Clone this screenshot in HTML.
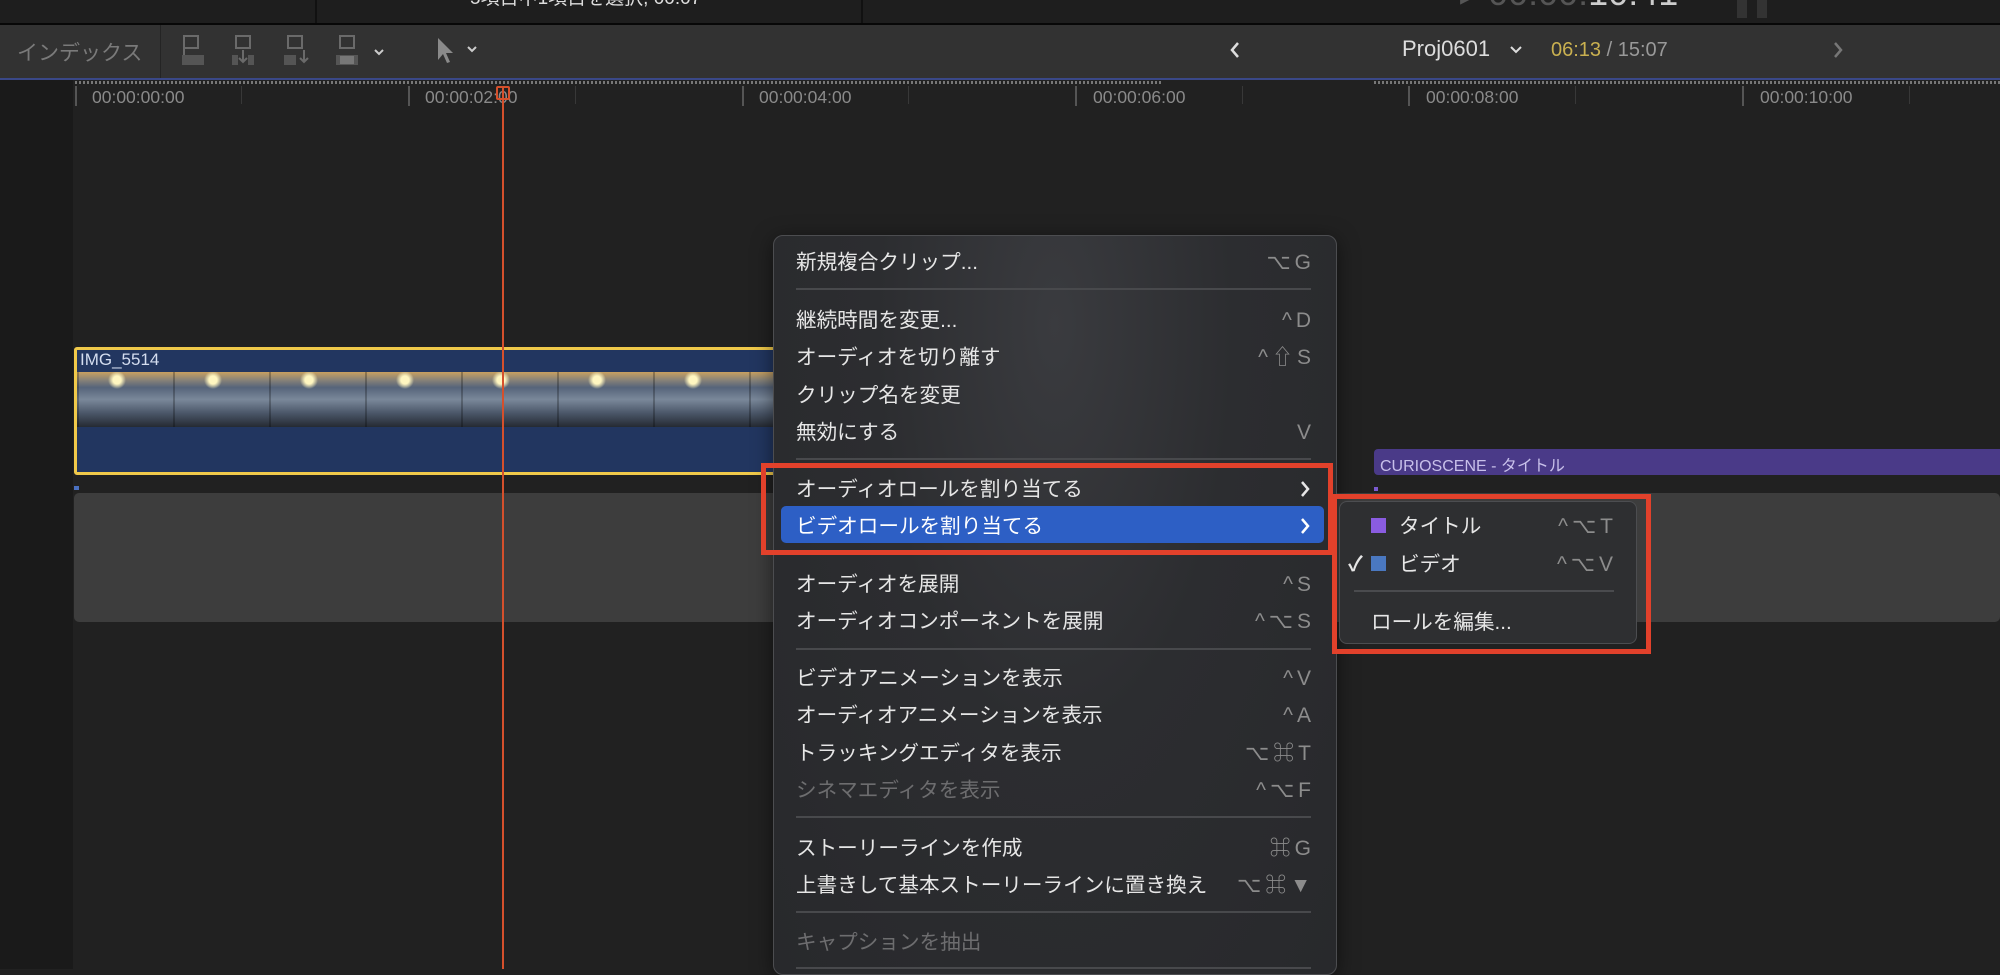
<!DOCTYPE html>
<html><head><meta charset="utf-8"><style>
*{margin:0;padding:0;box-sizing:border-box}
body{width:2000px;height:969px;overflow:hidden;background:#212121;font-family:"Liberation Sans","Noto Sans CJK JP",sans-serif;position:relative}
.a{position:absolute}
.mi{position:absolute;left:796px;font-size:20.6px;color:#e6e6e6;line-height:24px;white-space:nowrap;margin-top:3px}
.sc{position:absolute;font-size:21px;color:#8c8c8c;line-height:24px;white-space:nowrap;text-align:right;letter-spacing:4px;margin-right:-4px;margin-top:3px}
.sep{position:absolute;left:796px;width:515px;height:2px;background:#48494c}
.dis{color:#6d6d6f}
.tc{position:absolute;top:87px;font-size:17.5px;color:#8a8a8a}
.tk{position:absolute;top:86px;width:2px;height:20px;background:#555}
.tk2{position:absolute;top:86px;width:1px;height:18px;background:#383838}
.chev{position:absolute;left:1298px}
</style></head><body>
<div class="a" style="left:0;top:0;width:2000px;height:23px;background:#1e1e1e"></div>
<div class="a" style="left:315px;top:0;width:2px;height:23px;background:#111"></div>
<div class="a" style="left:861px;top:0;width:2px;height:23px;background:#111"></div>
<div class="a" style="left:470px;top:-17px;font-size:19px;color:#ddd;white-space:nowrap">5項目中1項目を選択, 00:07</div>
<div class="a" style="left:1460px;top:-28px;font-size:36px;color:#555;white-space:nowrap">▸ 00:00:<span style="color:#ccc">10:41</span></div>
<div class="a" style="left:1737px;top:0;width:10px;height:18px;background:#333"></div>
<div class="a" style="left:1757px;top:0;width:10px;height:18px;background:#333"></div>
<div class="a" style="left:0;top:23px;width:2000px;height:2px;background:#070707"></div>
<div class="a" style="left:0;top:25px;width:2000px;height:53px;background:#323232"></div>
<div class="a" style="left:17px;top:37px;font-size:21px;color:#7a7a7a">インデックス</div>
<div class="a" style="left:160px;top:25px;width:1px;height:53px;background:#242424"></div>
<svg class="a" style="left:180px;top:33px" width="220" height="36" viewBox="0 0 220 36" fill="none" stroke="#6a6a6a" stroke-width="2">
<rect x="4" y="3" width="14" height="12"/><path d="M4 15v8"/><rect x="2" y="22" width="22" height="10" fill="#555" stroke="none"/>
<rect x="56" y="3" width="14" height="12"/><path d="M63 17v12M59 25l4 4 4-4"/><rect x="52" y="22" width="6" height="10" fill="#555" stroke="none"/><rect x="68" y="22" width="6" height="10" fill="#555" stroke="none"/>
<rect x="108" y="3" width="14" height="12"/><path d="M124 17v12M120 25l4 4 4-4"/><rect x="104" y="22" width="12" height="10" fill="#555" stroke="none"/>
<rect x="160" y="3" width="14" height="12"/><rect x="156" y="22" width="22" height="10" fill="#555" stroke="none"/><rect x="160" y="23" width="14" height="8" fill="#777" stroke="none"/>
<path d="M195 17l4 4 4-4" stroke="#ccc"/>
</svg>
<svg class="a" style="left:435px;top:36px" width="50" height="30" viewBox="0 0 50 30"><path d="M3 2l0 22 5-6 4 9 3-1-4-9 7 0z" fill="#8a8a8a"/><path d="M33 11l4 4 4-4" stroke="#ccc" stroke-width="2" fill="none"/></svg>
<svg class="a" style="left:1228px;top:40px" width="14" height="20" viewBox="0 0 14 20"><path d="M10 3l-6 7 6 7" stroke="#ddd" stroke-width="2.5" fill="none"/></svg>
<div class="a" style="left:1402px;top:36px;font-size:22px;color:#ddd">Proj0601</div>
<svg class="a" style="left:1509px;top:44px" width="14" height="12" viewBox="0 0 14 12"><path d="M2 3l5 5 5-5" stroke="#ddd" stroke-width="2" fill="none"/></svg>
<div class="a" style="left:1551px;top:39px;font-size:20px;color:#c9b050">06:13<span style="color:#999"> / 15:07</span></div>
<svg class="a" style="left:1831px;top:40px" width="14" height="20" viewBox="0 0 14 20"><path d="M4 3l6 7-6 7" stroke="#777" stroke-width="2.5" fill="none"/></svg>
<div class="a" style="left:0;top:78px;width:2000px;height:2px;background:#3a4888"></div>
<div class="a" style="left:0;top:80px;width:73px;height:889px;background:#1a1a1a"></div>
<div class="a" style="left:73px;top:80px;width:1927px;height:889px;background:#212121"></div>
<div class="a" style="left:75px;top:81px;width:1087px;height:3px;background:repeating-linear-gradient(90deg,#777 0 2px,transparent 2px 4px)"></div>
<div class="a" style="left:1374px;top:81px;width:626px;height:3px;background:repeating-linear-gradient(90deg,#777 0 2px,transparent 2px 4px)"></div>
<div class="tk" style="left:75px"></div><div class="tk" style="left:408px"></div><div class="tk" style="left:742px"></div><div class="tk" style="left:1075px"></div><div class="tk" style="left:1408px"></div><div class="tk" style="left:1742px"></div>
<div class="tk2" style="left:241px"></div><div class="tk2" style="left:575px"></div><div class="tk2" style="left:908px"></div><div class="tk2" style="left:1242px"></div><div class="tk2" style="left:1575px"></div><div class="tk2" style="left:1909px"></div>
<div class="tc" style="left:92px">00:00:00:00</div><div class="tc" style="left:425px">00:00:02:00</div><div class="tc" style="left:759px">00:00:04:00</div><div class="tc" style="left:1093px">00:00:06:00</div><div class="tc" style="left:1426px">00:00:08:00</div><div class="tc" style="left:1760px">00:00:10:00</div>
<div class="a" style="left:74px;top:347px;width:720px;height:128px;background:#223660;border:3px solid #f0c94a;border-radius:3px"></div>
<div class="a" style="left:77px;top:372px;width:714px;height:55px;background:repeating-linear-gradient(90deg,rgba(0,0,0,.25) 0 2px,transparent 2px 96px),radial-gradient(circle at 40px 8px,#fff6c0 0 4px,transparent 9px) 0 0/96px 55px,linear-gradient(#c8a060 0,#8a8478 14%,#56647a 28%,#7a889a 50%,#4a5668 75%,#252a32 100%)"></div>
<div class="a" style="left:80px;top:350px;font-size:17px;color:#d4ddef">IMG_5514</div>
<div class="a" style="left:74px;top:486px;width:5px;height:4px;background:#4a70c0"></div>
<div class="a" style="left:74px;top:493px;width:1926px;height:129px;background:#3d3d3d;border-radius:5px"></div>
<div class="a" style="left:1374px;top:449px;width:626px;height:26px;background:#4a3a88;border-radius:4px 0 0 4px"></div>
<div class="a" style="left:1380px;top:452px;font-size:16px;color:#c8c0ea">CURIOSCENE - タイトル</div>
<div class="a" style="left:1374px;top:487px;width:4px;height:4px;background:#7a5ad0"></div>
<div class="a" style="left:502px;top:86px;width:2px;height:883px;background:#d5502c"></div>
<div class="a" style="left:496px;top:86px;width:14px;height:14px;border:2px solid #d5502c;border-radius:2px"></div>
<div class="a" style="left:773px;top:235px;width:564px;height:740px;background:radial-gradient(ellipse at 50% 12%,#3a3b3f 0,#2c2d30 45%,#28292c 100%);border:1px solid #4c4d50;border-radius:10px;box-shadow:0 4px 20px rgba(0,0,0,.5)"></div>
<div class="a" style="left:781px;top:506px;width:543px;height:37px;background:#2d5fc5;border-radius:5px"></div>
<div class="mi" style="top:248px">新規複合クリップ...</div><div class="sc" style="top:248px;right:689px">⌥G</div>
<div class="sep" style="top:288px"></div>
<div class="mi" style="top:306px">継続時間を変更...</div><div class="sc" style="top:306px;right:689px">^D</div>
<div class="mi" style="top:343px">オーディオを切り離す</div><div class="sc" style="top:343px;right:689px">^⇧S</div>
<div class="mi" style="top:381px">クリップ名を変更</div>
<div class="mi" style="top:418px">無効にする</div><div class="sc" style="top:418px;right:689px">V</div>
<div class="sep" style="top:458px"></div>
<div class="mi" style="top:475px">オーディオロールを割り当てる</div>
<svg class="chev" style="top:479px" width="14" height="20" viewBox="0 0 14 20"><path d="M4 3l6 7-6 7" stroke="#e6e6e6" stroke-width="2.5" fill="none"/></svg>
<div class="mi" style="top:512px;color:#fff">ビデオロールを割り当てる</div>
<svg class="chev" style="top:516px" width="14" height="20" viewBox="0 0 14 20"><path d="M4 3l6 7-6 7" stroke="#fff" stroke-width="2.5" fill="none"/></svg>
<div class="sep" style="top:552px"></div>
<div class="mi" style="top:570px">オーディオを展開</div><div class="sc" style="top:570px;right:689px">^S</div>
<div class="mi" style="top:607px">オーディオコンポーネントを展開</div><div class="sc" style="top:607px;right:689px">^⌥S</div>
<div class="sep" style="top:648px"></div>
<div class="mi" style="top:664px">ビデオアニメーションを表示</div><div class="sc" style="top:664px;right:689px">^V</div>
<div class="mi" style="top:701px">オーディオアニメーションを表示</div><div class="sc" style="top:701px;right:689px">^A</div>
<div class="mi" style="top:739px">トラッキングエディタを表示</div><div class="sc" style="top:739px;right:689px">⌥⌘T</div>
<div class="mi dis" style="top:776px">シネマエディタを表示</div><div class="sc" style="top:776px;right:689px">^⌥F</div>
<div class="sep" style="top:816px"></div>
<div class="mi" style="top:834px">ストーリーラインを作成</div><div class="sc" style="top:834px;right:689px">⌘G</div>
<div class="mi" style="top:871px">上書きして基本ストーリーラインに置き換え</div><div class="sc" style="top:871px;right:689px">⌥⌘▼</div>
<div class="sep" style="top:911px"></div>
<div class="mi dis" style="top:928px">キャプションを抽出</div>
<div class="sep" style="top:967px"></div>
<div class="a" style="left:1339px;top:501px;width:298px;height:143px;background:#2e2f31;border:1px solid #4c4d50;border-radius:8px"></div>
<div class="a" style="left:1371px;top:518px;width:15px;height:15px;background:#8a5ce0"></div>
<div class="mi" style="left:1399px;top:512px">タイトル</div><div class="sc" style="top:512px;right:387px">^⌥T</div>
<div class="mi" style="left:1348px;top:550px;font-weight:bold">✓</div>
<div class="a" style="left:1371px;top:556px;width:15px;height:15px;background:#4a78c0"></div>
<div class="mi" style="left:1399px;top:550px">ビデオ</div><div class="sc" style="top:550px;right:387px">^⌥V</div>
<div class="a" style="left:1354px;top:590px;width:260px;height:2px;background:#4a4b4e"></div>
<div class="mi" style="left:1371px;top:608px">ロールを編集...</div>
<div class="a" style="left:761px;top:463px;width:572px;height:92px;border:5px solid #e2412b"></div>
<div class="a" style="left:1332px;top:494px;width:319px;height:160px;border:5px solid #e2412b"></div>
</body></html>
